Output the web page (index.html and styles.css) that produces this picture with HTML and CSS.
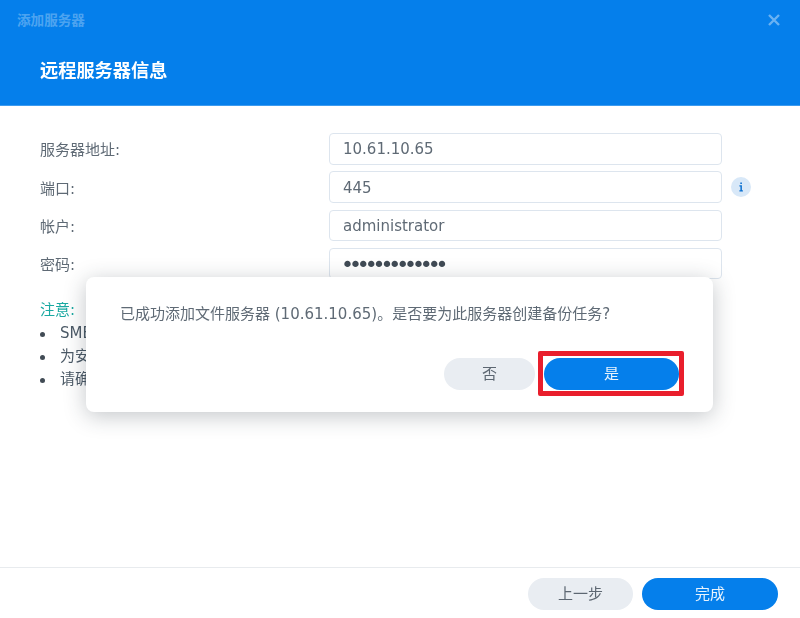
FILE: index.html
```html
<!DOCTYPE html>
<html lang="zh-CN">
<head>
<meta charset="utf-8">
<title>添加服务器</title>
<link rel="stylesheet" href="styles.css">
</head>
<body>
<div class="dialog">
  <header class="hero">
    <div class="titlebar">
      <span class="window-title">添加服务器</span>
      <svg class="close" viewBox="0 0 12 12" width="12" height="12" aria-hidden="true"><path d="M1 1 11 11M11 1 1 11"/></svg>
    </div>
    <h1 class="heading">远程服务器信息</h1>
  </header>
  <main class="body">
    <form class="form">
      <label class="label">服务器地址:</label>
      <div class="field">10.61.10.65</div>
      <span></span>
      <label class="label">端口:</label>
      <div class="field">445</div>
      <span class="info"><svg viewBox="0 0 20 20" width="20" height="20" aria-hidden="true"><circle class="info-bg" cx="10" cy="10" r="10"/><path class="info-i" d="M8.4 8.2h2.5v5h1v1.2H8.4v-1.2h1v-3.800h-1zM9.300 5.400h1.600v1.700H9.300z"/></svg></span>
      <label class="label">帐户:</label>
      <div class="field">administrator</div>
      <span></span>
      <label class="label">密码:</label>
      <div class="field dots">•••••••••••••</div>
      <span></span>
    </form>
    <section class="notes">
      <div class="notes-title">注意:</div>
      <ul class="notes-list">
        <li>SMB 服务需已启用</li>
        <li>为安全起见，请使用管理员帐户</li>
        <li>请确认防火墙已允许连接</li>
      </ul>
    </section>
  </main>
  <footer class="footer">
    <button class="btn btn-grey btn-back" type="button">上一步</button>
    <button class="btn btn-blue btn-done" type="button">完成</button>
  </footer>
</div>
<div class="modal">
  <p class="modal-text">已成功添加文件服务器 (10.61.10.65)。是否要为此服务器创建备份任务?</p>
  <div class="modal-actions">
    <button class="btn btn-grey btn-no" type="button">否</button>
    <span class="highlight"><button class="btn btn-blue btn-yes" type="button">是</button></span>
  </div>
</div>
</body>
</html>
```
FILE: styles.css
```css
* { box-sizing: border-box; }
html, body { margin: 0; padding: 0; }
body {
  width: 800px;
  height: 618px;
  overflow: hidden;
  position: relative;
  background: #fff;
  color: #4c5a67;
  font-family: "DejaVu Sans", "Noto Sans CJK SC", sans-serif;
  font-size: 15px;
}
.dialog {
  height: 618px;
  display: flex;
  flex-direction: column;
  filter: blur(0.45px);
}
.hero {
  height: 106px;
  flex: none;
  background: #057feb;
  padding: 0 20px 0 17px;
  border-bottom: 1px solid #3d9bef;
}
.titlebar {
  height: 40px;
  display: flex;
  align-items: center;
  justify-content: space-between;
}
.window-title {
  font-size: 13.6px;
  color: rgba(255, 255, 255, .3);
  font-weight: 700;
  line-height: 18px;
  margin-top: -1px;
}
.close { stroke: rgba(255, 255, 255, .4); stroke-width: 2.4; fill: none; }
.heading {
  margin: 18px 0 0 23px;
  font-size: 18.2px;
  line-height: 26px;
  font-weight: 700;
  color: #fff;
}
.body {
  flex: 1;
  padding: 27px 40px 0;
}
.form {
  display: grid;
  grid-template-columns: 289px 393px 30px;
  grid-auto-rows: 31.500px;
  row-gap: 6.800px;
  align-items: center;
}
.label { color: #5f6a75; }
.field {
  height: 100%;
  border: 1px solid #dde5ee;
  border-radius: 4px;
  padding: 1px 13px 0;
  display: flex;
  align-items: center;
  color: #5f6a75;
  background: #fff;
}
.dots {
  font-size: 22px;
  color: #414b55;
  letter-spacing: -5.100px;
  line-height: 20px;
  padding: 2px 13px 0 11px;
}
.info { display: flex; justify-content: flex-end; margin-right: 1px; }
.info-bg { fill: #d8e8f8; }
.info-i { fill: #0a6fd0; }
.notes { margin-top: 21px; }
.notes-title { color: #1aa9a2; line-height: 20px; }
.notes-list { margin: 2px 0 0; padding: 0; list-style: none; }
.notes-list li { line-height: 23px; padding-left: 20px; position: relative; }
.notes-list li::before {
  content: "";
  position: absolute;
  left: 0;
  top: 10px;
  width: 5px;
  height: 5px;
  border-radius: 50%;
  background: #414b55;
}
.footer {
  height: 51px;
  flex: none;
  border-top: 1px solid #e8ebee;
  display: flex;
  justify-content: flex-end;
  align-items: flex-start;
  gap: 9px;
  padding: 10px 22px 0 0;
}
.btn {
  height: 32px;
  border: 0;
  border-radius: 16px;
  padding: 0;
  font: inherit;
  line-height: 20px;
}
.btn-grey { background: #e9edf2; color: #5d6772; }
.btn-blue { background: #057feb; color: #e8f3fd; }
.btn-back { width: 105px; }
.btn-done { width: 136px; }
.modal {
  position: absolute;
  left: 86px;
  top: 277px;
  width: 627px;
  height: 135px;
  background: #fff;
  border-radius: 8px;
  box-shadow: 0 4px 22px rgba(40, 50, 60, .28);
  padding: 27px 29px 0 34px;
  display: flex;
  flex-direction: column;
  filter: blur(0.45px);
}
.modal-text { margin: 0; line-height: 20px; color: #5f6a75; white-space: nowrap; }
.modal-actions {
  margin-top: 27px;
  display: flex;
  justify-content: flex-end;
  align-items: flex-start;
  gap: 3px;
}
.btn-no { width: 91px; margin-top: 7px; }
.highlight {
  display: block;
  padding: 2px 0 1px 1px;
  border: 5px solid #e91e2c;
  border-radius: 2px;
  line-height: 0;
}
.btn-yes { width: 135px; }
```
